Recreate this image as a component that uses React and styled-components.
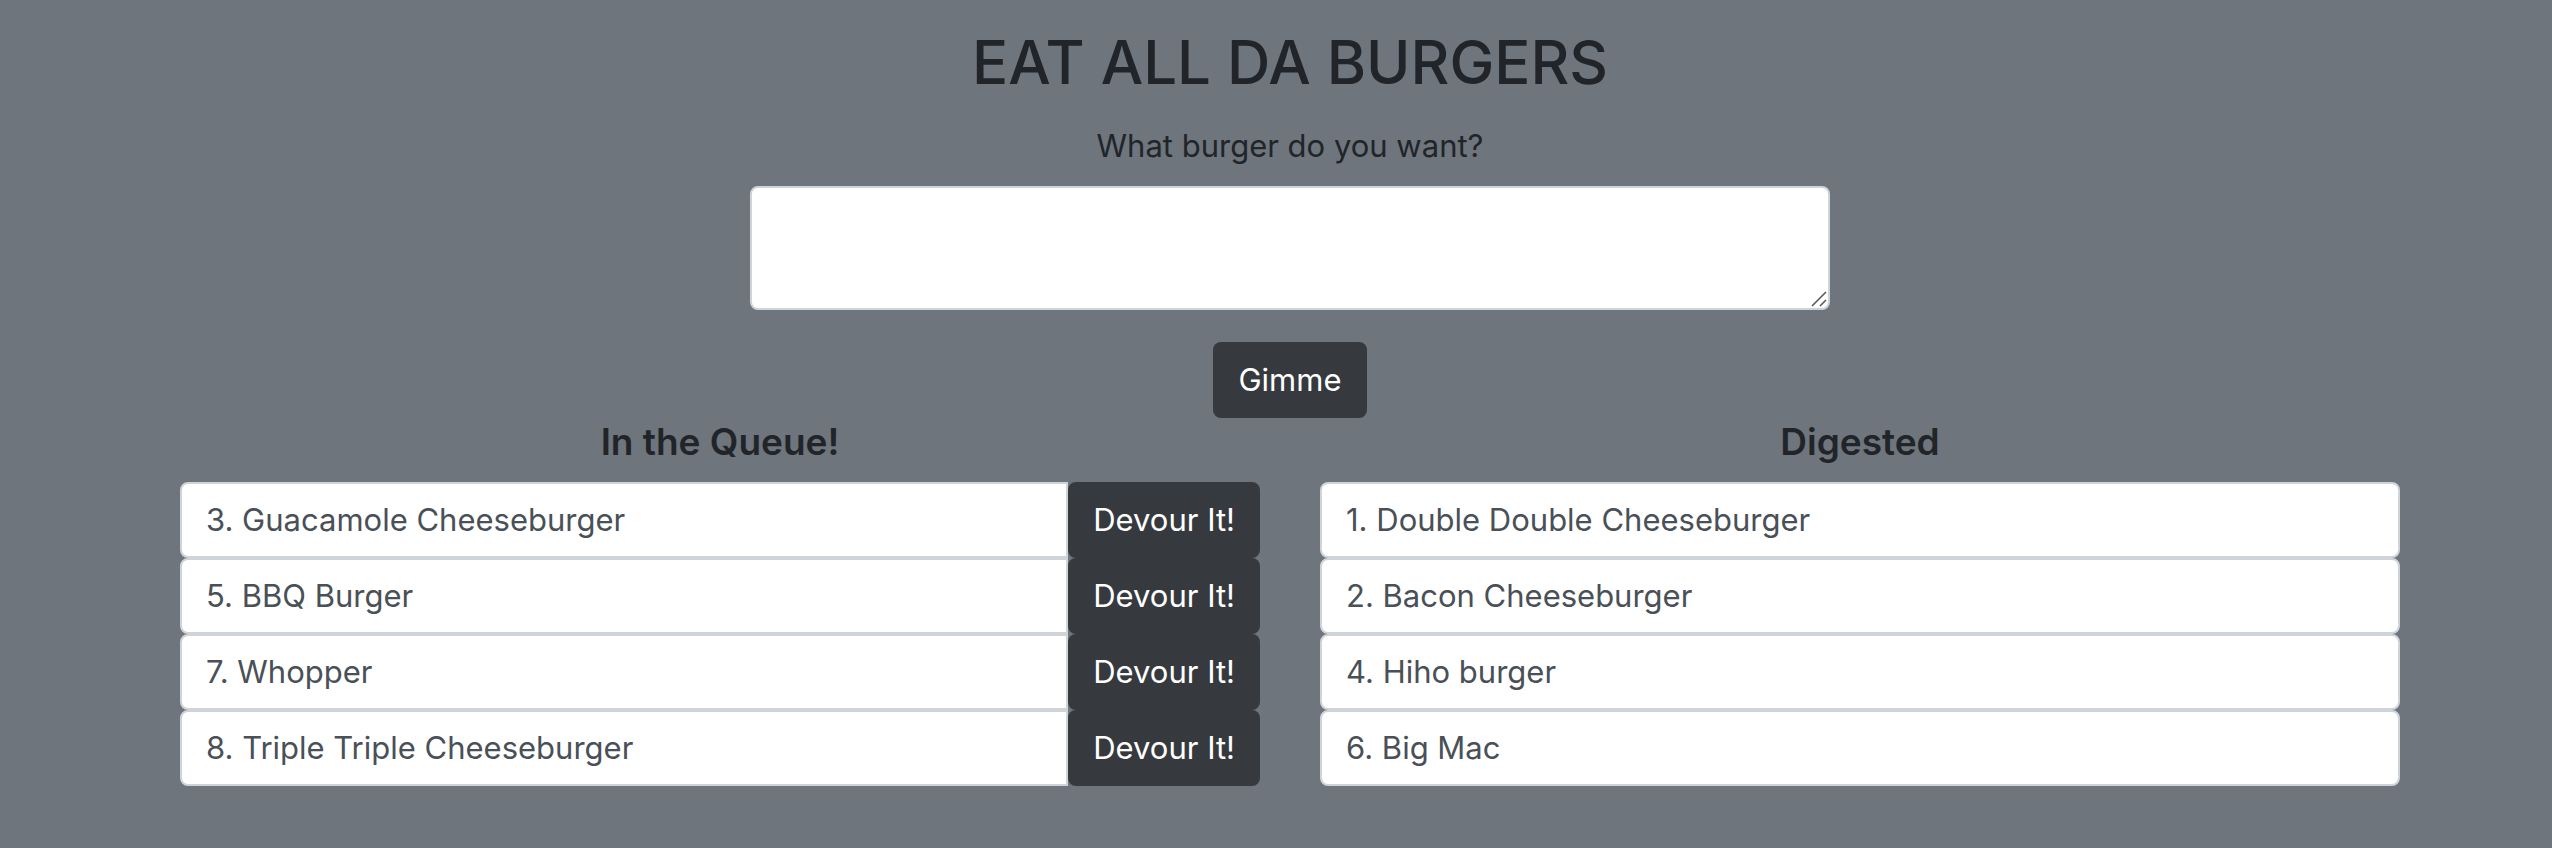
import React, { useState } from "react";
import styled, { createGlobalStyle } from "styled-components";

const GlobalStyle = createGlobalStyle`
  *, *::before, *::after { box-sizing: border-box; }
  html { background: #6e757c; }
  body {
    margin: 0;
    background: #6e757c;
    color: #212529;
    font-family: Inter, "Liberation Sans", sans-serif;
    font-size: 31px;
    line-height: 48px;
  }
`;

const Page = styled.div`
  padding: 24px 0 62px 28px;
`;

const Container = styled.main`
  max-width: 2280px;
  margin: 0 auto;
  padding: 0 30px;
`;

const Title = styled.h1`
  margin: 0 0 22px;
  font-size: 60px;
  font-weight: 500;
  line-height: 76px;
  text-align: center;
`;

const OrderForm = styled.form`
  display: flex;
  flex-direction: column;
  align-items: center;
  max-width: 1080px;
  margin: 0 auto;
`;

const Label = styled.label`
  margin-bottom: 16px;
`;

const TextAreaFrame = styled.div`
  position: relative;
  display: flex;
  width: 100%;
  margin-bottom: 32px;
`;

const TextArea = styled.textarea`
  flex: 1;
  height: 124px;
  padding: 12px 24px;
  border: 2px solid #cfd4d9;
  border-radius: 8px;
  background: #fff;
  color: #495057;
  font: inherit;
  resize: none;
  outline: none;

  &:focus { border-color: #80bdff; }
`;

const Grip = styled.svg`
  position: absolute;
  right: 3px;
  bottom: 3px;
  pointer-events: none;
`;

const Button = styled.button`
  flex: none;
  height: 76px;
  padding: 0 25px;
  border: 0;
  border-radius: 8px;
  background: #363a3e;
  color: #fff;
  font: inherit;
  white-space: nowrap;
  cursor: pointer;

  &:hover { background: #23272b; }
`;

const Columns = styled.div`
  display: grid;
  grid-template-columns: 1fr 1fr;
  gap: 60px;
`;

const ColumnTitle = styled.h2`
  margin: 0 0 16px;
  font-size: 37px;
  font-weight: 600;
  line-height: 48px;
  text-align: center;
`;

const List = styled.ul`
  margin: 0;
  padding: 0;
  list-style: none;
`;

const Row = styled.li`
  display: flex;
`;

const Burger = styled.div`
  flex: 1;
  min-width: 0;
  height: 76px;
  padding: 12px 24px;
  border: 2px solid #cfd4d9;
  border-radius: ${(p) => (p.$joined ? "8px 0 0 8px" : "8px")};
  background: #fff;
  color: #495057;
  overflow: hidden;
  text-overflow: ellipsis;
  white-space: nowrap;
`;

const initialBurgers = [
  { id: 1, name: "Double Double Cheeseburger", devoured: true },
  { id: 2, name: "Bacon Cheeseburger", devoured: true },
  { id: 3, name: "Guacamole Cheeseburger", devoured: false },
  { id: 4, name: "Hiho burger", devoured: true },
  { id: 5, name: "BBQ Burger", devoured: false },
  { id: 6, name: "Big Mac", devoured: true },
  { id: 7, name: "Whopper", devoured: false },
  { id: 8, name: "Triple Triple Cheeseburger", devoured: false },
];

export default function App() {
  const [burgers, setBurgers] = useState(initialBurgers);
  const [draft, setDraft] = useState("");

  const addBurger = (event) => {
    event.preventDefault();
    const name = draft.trim();
    if (!name) return;
    setBurgers([...burgers, { id: burgers.length + 1, name, devoured: false }]);
    setDraft("");
  };

  const devour = (id) =>
    setBurgers(burgers.map((b) => (b.id === id ? { ...b, devoured: true } : b)));

  return (
    <Page>
      <GlobalStyle />
      <Container>
        <Title>EAT ALL DA BURGERS</Title>
        <OrderForm onSubmit={addBurger}>
          <Label htmlFor="burger">What burger do you want?</Label>
          <TextAreaFrame>
            <TextArea
              id="burger"
              value={draft}
              onChange={(event) => setDraft(event.target.value)}
            />
            <Grip width="16" height="16" viewBox="0 0 16 16" aria-hidden="true">
              <path d="M1 15 15 1M9 15l6-6" fill="none" stroke="#555" strokeWidth="1.5" />
            </Grip>
          </TextAreaFrame>
          <Button type="submit">Gimme</Button>
        </OrderForm>
        <Columns>
          <section>
            <ColumnTitle>In the Queue!</ColumnTitle>
            <List>
              {burgers.filter((b) => !b.devoured).map((b) => (
                <Row key={b.id}>
                  <Burger $joined>{b.id}. {b.name}</Burger>
                  <Button type="button" onClick={() => devour(b.id)}>Devour It!</Button>
                </Row>
              ))}
            </List>
          </section>
          <section>
            <ColumnTitle>Digested</ColumnTitle>
            <List>
              {burgers.filter((b) => b.devoured).map((b) => (
                <Row key={b.id}>
                  <Burger>{b.id}. {b.name}</Burger>
                </Row>
              ))}
            </List>
          </section>
        </Columns>
      </Container>
    </Page>
  );
}
